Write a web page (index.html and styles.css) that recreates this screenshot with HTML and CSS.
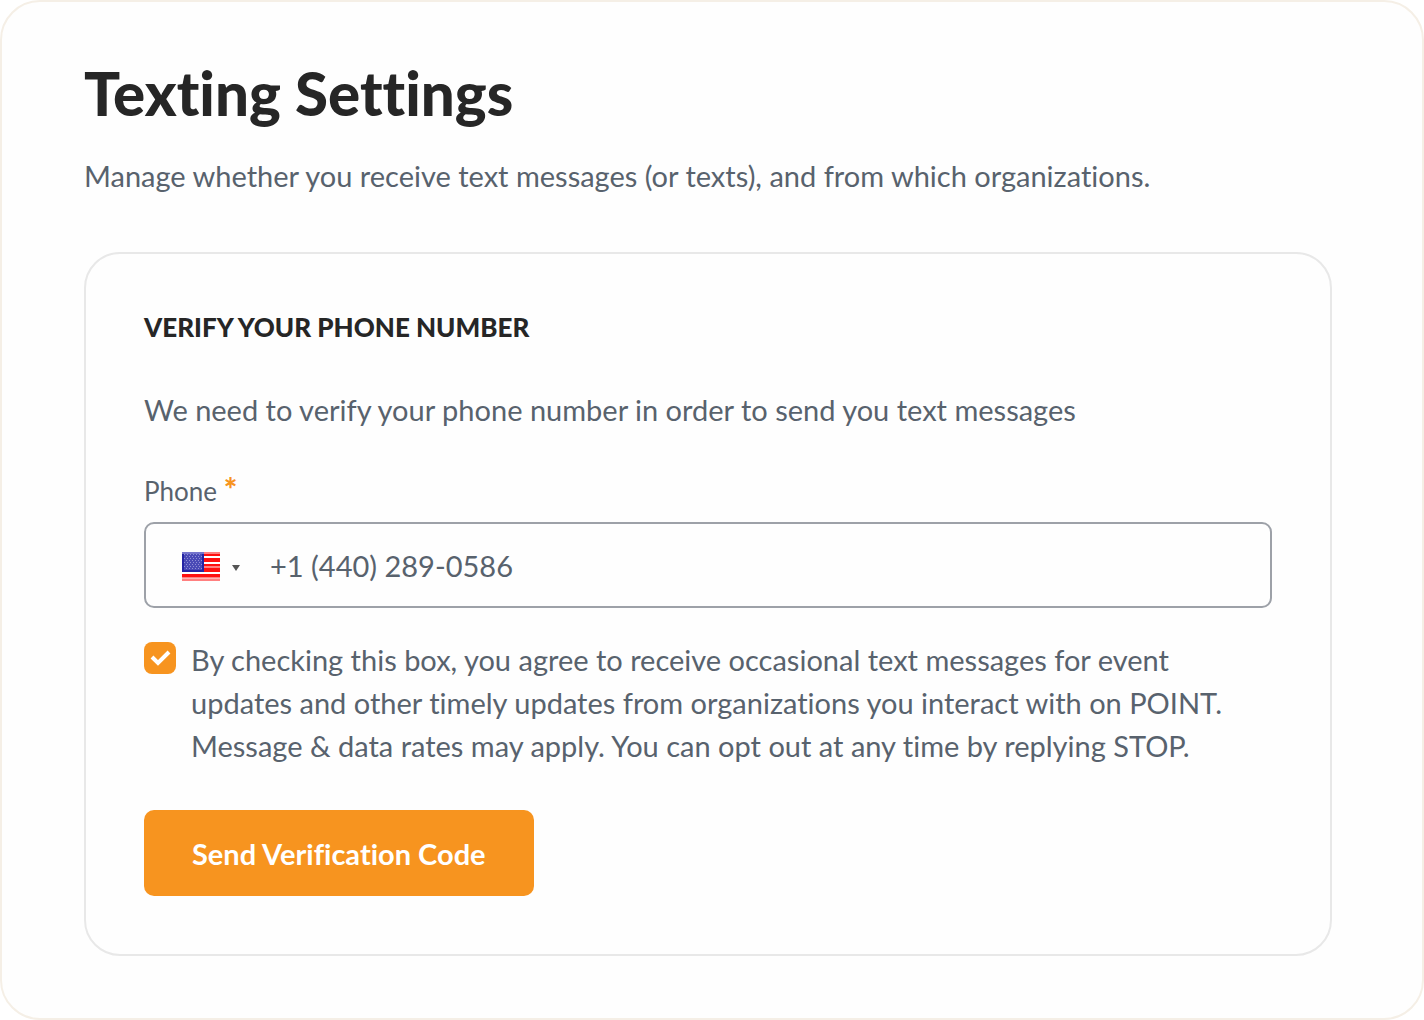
FILE: index.html
```html
<!DOCTYPE html>
<html lang="en">
<head>
    <meta charset="UTF-8">
    <meta name="viewport" content="width=device-width, initial-scale=1.0">
    <title>Texting Settings</title>
    <link rel="stylesheet" href="styles.css">
</head>
<body>
    <main class="panel">
        <h1>Texting Settings</h1>
        <p class="intro">Manage whether you receive text messages (or texts), and from which organizations.</p>

        <form class="card">
            <h2>Verify your phone number</h2>
            <p class="card-text">We need to verify your phone number in order to send you text messages</p>

            <label class="field-label" for="phone">Phone <span class="required">*</span></label>
            <div class="phone-field">
                <button type="button" class="country" aria-label="Country: United States" aria-haspopup="listbox">
                    <svg class="flag" viewBox="0 0 38 29" aria-hidden="true">
                        <rect width="38" height="29" fill="#fff"/>
                        <path fill="#ff8080" d="M0 0h38v2H0zM0 14h38v2H0zM0 24h38v2H0zM0 27h38v2H0z"/>
                        <path fill="#ff1010" d="M0 2h38v2H0zM0 6h38v4H0zM0 12h38v2H0zM0 16h38v4H0zM0 22h38v3H0z"/>
                        <path fill="#ffb3b3" d="M0 26h38v1H0z"/>
                        <rect width="22" height="20" fill="#2424a4"/>
                        <rect width="22" height="2" fill="#7474cc"/>
                        <rect x="2" y="2" width="18" height="16" fill="#4a4ab6"/>
                        <path stroke="#8f8fd6" stroke-width="1" stroke-dasharray="1 2" d="M2 2.5h18M4 4.5h16M2 6.5h18M4 8.5h16M2 10.5h18M4 12.5h16M2 14.5h18M4 16.5h16"/>
                    </svg>
                    <svg class="arrow" viewBox="0 0 8 10" aria-hidden="true">
                        <path fill="#555" d="M0 4h8L4 10z"/>
                    </svg>
                </button>
                <input type="tel" id="phone" value="+1 (440) 289-0586" required>
            </div>

            <div class="consent">
                <input type="checkbox" id="consent" checked>
                <label for="consent">By checking this box, you agree to receive occasional text messages for event updates and other timely updates from organizations you interact with on POINT. Message &amp; data rates may apply. You can opt out at any time by replying STOP.</label>
            </div>

            <button type="submit" class="button">Send Verification Code</button>
        </form>
    </main>
</body>
</html>
```
FILE: styles.css
```css
* {
    box-sizing: border-box;
}
body {
    margin: 0;
    font-family: Lato, "Liberation Sans", sans-serif;
    font-size: 29px;
    line-height: 43px;
    font-variant-ligatures: none;
    color: #58626d;
    background-color: #fff;
}
h1, h2, p {
    margin: 0;
}
.panel {
    min-height: 100vh;
    padding: 55px 90px 62px 82px;
    background-color: #fefefe;
    border: 2px solid #f5efe6;
    border-radius: 40px;
}
h1 {
    font-size: 60px;
    line-height: 72px;
    font-weight: 900;
    color: #262626;
}
.intro {
    margin-top: 25px;
}
.card {
    margin-top: 55px;
    padding: 52px 58px 58px;
    border: 2px solid #e8e8e8;
    border-radius: 36px;
}
h2 {
    font-size: 26px;
    line-height: 42px;
    font-weight: 900;
    text-transform: uppercase;
    color: #262626;
}
.card-text {
    margin-top: 40px;
}
.field-label {
    display: block;
    margin-top: 40px;
    font-size: 26px;
    line-height: 40px;
}
.required {
    color: #f7941f;
    font-size: 32px;
    line-height: 1;
    font-weight: 900;
}
.phone-field {
    display: flex;
    align-items: center;
    height: 86px;
    margin-top: 11px;
    border: 2px solid #9da1a8;
    border-radius: 10px;
}
.phone-field:focus-within {
    border-color: #f7941f;
}
.country {
    display: flex;
    align-items: center;
    gap: 12px;
    padding: 2px 30px 0 36px;
    height: 100%;
    border: none;
    background: none;
    cursor: pointer;
}
.flag {
    width: 38px;
    height: 29px;
}
.arrow {
    width: 8px;
    height: 10px;
}
.phone-field input {
    flex: 1;
    min-width: 0;
    height: 100%;
    padding: 0;
    border: none;
    outline: none;
    background: none;
    font: inherit;
    color: inherit;
}
.consent {
    display: flex;
    align-items: flex-start;
    gap: 15px;
    margin-top: 30px;
}
.consent input {
    appearance: none;
    flex: none;
    width: 32px;
    height: 32px;
    margin: 4px 0 0;
    border-radius: 8px;
    border: 2px solid #9da1a8;
    cursor: pointer;
}
.consent input:checked {
    border: none;
    background: #f7941f url("data:image/svg+xml,%3Csvg xmlns='http://www.w3.org/2000/svg' viewBox='0 0 32 32'%3E%3Cpath d='M8 15l6 6L25 10' fill='none' stroke='white' stroke-width='4'/%3E%3C/svg%3E") center / 100%;
}
.button {
    margin-top: 43px;
    height: 86px;
    padding: 0 48px;
    border: none;
    border-radius: 10px;
    background-color: #f7941f;
    color: #fff;
    font: inherit;
    font-weight: bold;
    cursor: pointer;
}
.button:hover {
    background-color: #e58413;
}
```
